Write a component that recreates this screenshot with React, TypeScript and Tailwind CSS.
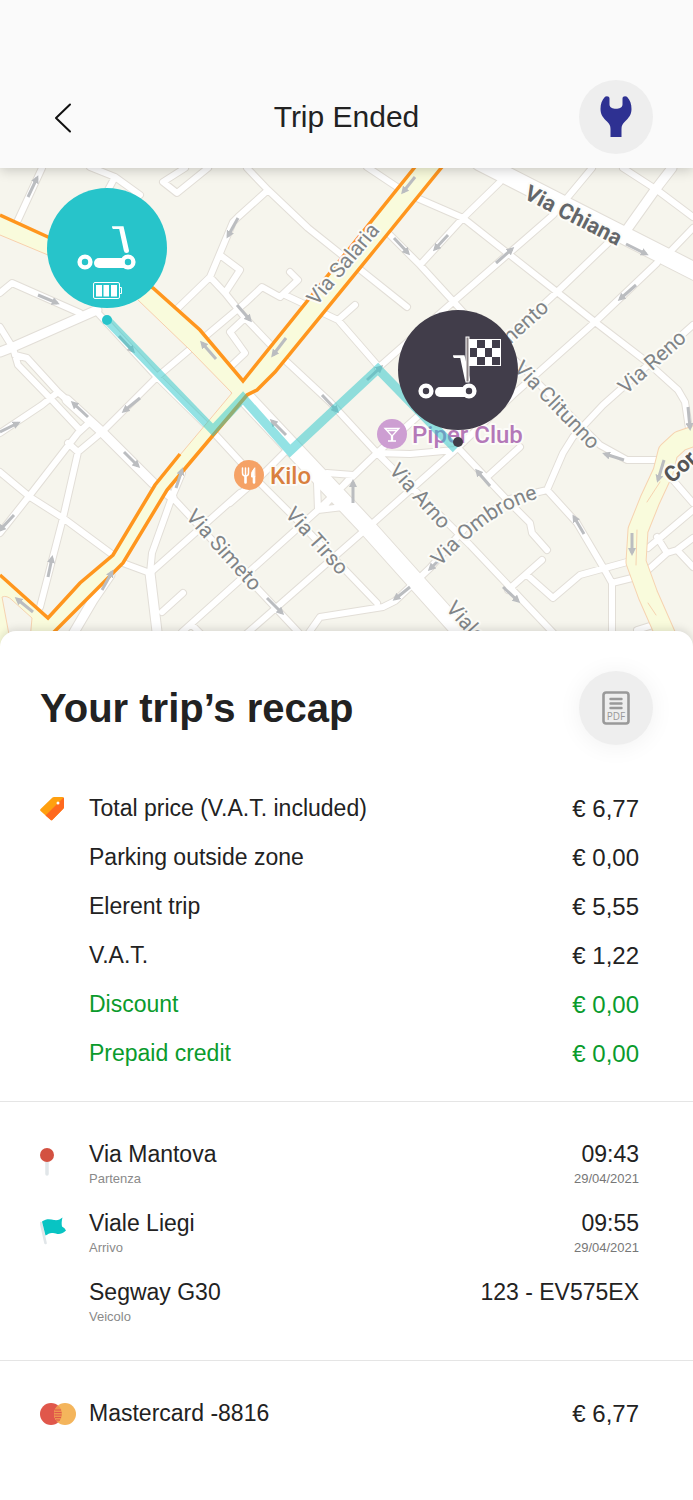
import type { ReactNode } from 'react';

const streets = [
  'M18 220L42 168',
  'M90 167L115 177L140 195M115 177L108 190',
  'M185 168L163 182L177 193L208 168',
  'M268 190L238 217L233 222L210 277L178 308',
  'M220 255L240 270L225 293M210 277L225 293L245 318L287 362L330 402L377 453L470 545L560 640',
  'M0 293L12 283L80 313',
  'M0 327L13 348L18 365L50 398L80 430',
  'M15 355L27 358L58 392L75 407L102 432',
  'M58 392L42 405L0 433',
  'M97 312L157 377L213 432L260 483L300 523L377 603',
  'M78 452L102 432L157 377L207 335L245 303L262 287L280 297L298 280L290 272',
  'M245 318L230 332L245 353L230 367',
  'M247 168L268 190L308 228L407 307',
  'M285 295L338 320L355 305M338 320L378 366',
  'M367 167L397 187M417 198L463 218L557 292L595 322L647 362L678 390L685 402L690 435',
  'M390 235L420 265L463 312L520 365L600 445L627 460L660 460',
  'M378 368L453 302L553 215L592 168',
  'M420 265L463 218L500 182',
  'M623 168L657 190L693 217',
  'M693 228L667 255',
  'M657 263L595 322L513 395L452 453L373 523L245 635',
  'M608 243L557 292L507 338L417 417L377 453L318 510L182 632',
  'M377 453L410 454L455 450',
  'M693 325L603 405L573 437L563 453L547 490L510 499L465 528L430 568L395 601L383 607L320 617L308 634',
  'M460 450L510 503L530 523L532 533L547 550M487 477L520 447',
  'M508 590L542 560M527 575L553 598L580 575L627 562',
  'M547 490L577 523L603 567L612 583L612 640M612 583L640 576',
  'M673 480L693 503M648 548L693 510M657 537L667 553M648 570L667 553L677 550L693 538M677 550L693 567M637 630L653 625',
  'M230 503L262 475L285 452',
  'M317 483L318 510L343 507M327 473L353 475L325 505',
  'M123 563L150 573L240 493',
  'M182 473L172 497L152 553L150 573L158 640M162 612L183 593M191 624L201 634',
  'M172 497L240 570L300 634',
  'M90 422L78 433L30 495L0 533',
  'M68 443L78 452L63 518L40 607',
  'M0 472L30 497L63 518L113 555',
];

const wideStreets = ['M0 352L13 347L97 310', 'M67 400L102 432L153 483L172 497', 'M672 168L655 190L623 235', 'M110 575L93 600L73 634', 'M150 573L158 640'];

const avenues = ['M240 392L367 527L470 642', 'M480 162L580 213L700 274'];

const salaria =
  'M415 167L243 381L232 393L180 455L155 485L113 555L80 583L48 618L30 645L50 645L53 631L123 563L167 490L188 465L240 404L257 390L275 372L442 167Z';
const diagonal = 'M0 215L48 237L153 288L200 330L244 381L232 393L190 350L138 300L48 255L0 235Z';

const arrows = [
  [28, 197, 37, 178], [38, 295, 57, 303], [119, 336, 133, 351], [216, 359, 202, 343],
  [238, 218, 228, 236], [415, 177, 403, 192], [394, 238, 408, 253], [448, 235, 435, 249],
  [237, 305, 250, 320], [286, 338, 273, 355], [367, 380, 381, 367], [322, 395, 337, 411],
  [496, 263, 512, 249], [626, 244, 646, 254], [636, 285, 620, 299], [0, 432, 18, 423],
  [88, 417, 73, 403], [140, 398, 124, 411], [124, 452, 138, 466], [48, 577, 52, 558],
  [14, 515, 0, 530], [33, 612, 17, 599], [102, 590, 112, 572], [176, 488, 182, 470],
  [286, 435, 272, 421], [353, 503, 353, 482], [267, 598, 282, 613], [410, 587, 395, 599],
  [438, 561, 430, 569], [490, 486, 477, 471], [584, 534, 574, 517], [624, 460, 605, 454],
  [664, 460, 658, 480], [632, 533, 632, 553], [688, 407, 690, 428], [503, 587, 518, 601],
];

const labels = [
  { text: 'Via Salaria', x: 343, y: 264, angle: -50 },
  { text: 'Via Reno', x: 652, y: 362, angle: -42 },
  { text: 'Via Clitunno', x: 557, y: 405, angle: 46 },
  { text: 'Via Arno', x: 420, y: 496, angle: 48 },
  { text: 'Via Tirso', x: 317, y: 541, angle: 48 },
  { text: 'Via Simeto', x: 224, y: 550, angle: 48 },
];

const prices = [
  { label: 'Total price (V.A.T. included)', value: '€ 6,77', icon: <TagIcon /> },
  { label: 'Parking outside zone', value: '€ 0,00' },
  { label: 'Elerent trip', value: '€ 5,55' },
  { label: 'V.A.T.', value: '€ 1,22' },
  { label: 'Discount', value: '€ 0,00', green: true },
  { label: 'Prepaid credit', value: '€ 0,00', green: true },
];

function TagIcon() {
  return (
    <svg className="h-6 w-6" viewBox="0 0 24 24">
      <path d="M12.5 0.5Q13 0 14 0H22.5Q24 0 24 1.500V10Q24 11 23.300 11.700L12.500 22.800Q11.500 23.800 10.500 22.800L0.600 14Q-0.400 13 0.600 12Z" fill="#ffa00f" />
      <path d="M23.600 0.400Q24 0.800 24 1.500V10Q24 11 23.300 11.700L12.500 22.800Q11.500 23.800 10.500 22.800L5.500 18.400Z" fill="#ff691f" />
      <circle cx="18" cy="6" r="1.500" fill="#fff" />
    </svg>
  );
}

function PinIcon() {
  return (
    <svg className="h-7 w-3.5" viewBox="0 0 14 28">
      <path d="M7 12V26" stroke="#e1e6e9" strokeWidth="3.500" strokeLinecap="round" />
      <circle cx="7" cy="7" r="7" fill="#d35141" />
    </svg>
  );
}

function FlagIcon() {
  return (
    <svg className="h-7 w-[26px]" viewBox="0 0 26 28">
      <path d="M1 6L5.500 26" stroke="#e1e6e9" strokeWidth="2.600" strokeLinecap="round" />
      <path d="M2 4.500C7 1 11 2.500 14 3C18 3.500 20 2.500 22.500 0.500C21.500 4 21.500 7 22 9.500Q25 11 26 13.500C20 19 17 16.500 13 16C10 15.500 8 17 5.500 18.500Z" fill="#08c4c3" />
    </svg>
  );
}

function CardIcon() {
  return (
    <svg className="h-[22px] w-9" viewBox="0 0 36 22">
      <circle cx="11" cy="11" r="11" fill="#e0574b" />
      <circle cx="25" cy="11" r="11" fill="#f4b55c" />
      <path d="M18 2.500A11 11 0 0 1 18 19.500A11 11 0 0 1 18 2.500Z" fill="#ee9350" />
      <path d="M15 7H21M14.500 9.500H21.500M14.500 12H21.500M15 14.500H21M16 17H20" stroke="#e0574b" strokeWidth="1" />
    </svg>
  );
}

function WrenchIcon() {
  return (
    <svg className="h-[42px] w-8" viewBox="0 0 32 42">
      <path
        d="M5 0.800C1.800 4 0.500 8.500 0.500 13C0.500 19 3.500 22 7 25.500C9.500 28 10.500 29.500 10.500 33V41H21.500V33C21.500 29.500 22.500 28 25 25.500C28.500 22 31.500 19 31.500 13C31.500 8.500 30.200 4 27 0.800C25.500 -0.400 22.500 0 22.500 2.500V8.500C22.500 14.300 9.500 14.300 9.500 8.500V2.500C9.500 0 6.500 -0.400 5 0.800Z"
        fill="#2e3192"
      />
    </svg>
  );
}

function PdfIcon() {
  return (
    <svg className="h-[34px] w-7" viewBox="0 0 28 34">
      <rect x="1.500" y="1.500" width="25" height="31" rx="2.500" fill="none" stroke="#999" strokeWidth="2.600" />
      <path d="M8.500 8H19.500M8.500 12.500H19.500M8.500 17H19.500" stroke="#999" strokeWidth="2.400" strokeLinecap="round" />
      <text x="14" y="29" textAnchor="middle" fontSize="10" fill="#999" fontFamily="'Open Sans', sans-serif">
        PDF
      </text>
    </svg>
  );
}

function Scooter({ hole }: { hole: string }) {
  return (
    <g>
      <path d="M99 263H128" stroke="#fff" strokeWidth="10" strokeLinecap="round" />
      <circle cx="85" cy="262" r="5.400" fill={hole} stroke="#fff" strokeWidth="4.400" />
      <circle cx="128" cy="262" r="5.400" fill={hole} stroke="#fff" strokeWidth="4.400" />
      <path d="M112 226.300H123.500L129 250.500Q129 253 126.500 253Q124.300 253 123.800 250.500L119.200 229H113Q112 229 112 226.300Z" fill="#fff" />
    </g>
  );
}

function TripMap() {
  return (
    <svg className="block w-full bg-[#f6f5ed]" viewBox="0 168 693 479" role="img" aria-label="Trip route">
      <defs>
        <marker id="arrow" viewBox="0 0 8 8" refX="5" refY="4" markerWidth="8" markerHeight="8" markerUnits="userSpaceOnUse" orient="auto">
          <path d="M0 0L8 4L0 8Z" fill="#bbbdc0" />
        </marker>
        <path id="ombrone" d="M440 567C468 537 498 508 546 496" />
      </defs>

      <g fill="none" strokeLinecap="round" strokeLinejoin="round">
        <g stroke="#e2ded7">
          <path d={streets.join('')} strokeWidth="8" />
          <path d={wideStreets.join('')} strokeWidth="11" />
          <path d={avenues.join('')} strokeWidth="19" />
        </g>
        <g stroke="#fff">
          <path d={streets.join('')} strokeWidth="6" />
          <path d={wideStreets.join('')} strokeWidth="9" />
          <path d={avenues.join('')} strokeWidth="17" />
        </g>
        <path d="M700 434L680 441L668 452L663 472L650 500L638 530L636 562L648 595L670 645" stroke="#f6d3b0" strokeWidth="21" />
        <path d="M700 434L680 441L668 452L663 472L650 500L638 530L636 562L648 595L670 645" stroke="#f9fbdc" strokeWidth="19" />
        <path d="M660 482L647 502M637 530L636 565M648 603L656 615" stroke="#f6d3b0" />
      </g>

      <path d="M0 573L48 618L54 631V647H0Z" fill="#f9fbdc" />
      <path d="M2 597Q7 595 12 600L32 618L30 640H10Z" fill="#f6f5ed" stroke="#f6d3b0" />
      <path d={salaria} fill="#f9fbdc" />
      <path d={diagonal} fill="#f9fbdc" />
      <path d="M0 235L48 255M138 300L190 350L232 393L180 455" fill="none" stroke="#f8cfac" />
      <g fill="none" stroke="#ff961e" strokeWidth="3.500">
        <path d="M0 215L48 237L153 288L200 330L243 381L415 167" />
        <path d="M442 167L373 252L275 372L257 390L247 395L188 465L167 490L123 563L53 633" />
        <path d="M180 454L155 485L113 555L80 583L48 618L0 575" />
      </g>

      <g stroke="#bbbdc0" strokeWidth="3">
        {arrows.map(([x1, y1, x2, y2]) => (
          <line key={`${x1}-${y1}`} x1={x1} y1={y1} x2={x2} y2={y2} markerEnd="url(#arrow)" />
        ))}
      </g>

      <g
        fill="#808487"
        stroke="#fcfcf8"
        strokeWidth="4"
        strokeLinejoin="round"
        paintOrder="stroke"
        fontFamily="Roboto, sans-serif"
        fontSize="21"
      >
        {labels.map((label) => (
          <text key={label.text} x={label.x} y={label.y} textAnchor="middle" dominantBaseline="central" transform={`rotate(${label.angle} ${label.x} ${label.y})`}>
            {label.text}
          </text>
        ))}
        <text>
          <textPath href="#ombrone">Via Ombrone</textPath>
        </text>
        <text x="550" y="309" textAnchor="end" transform="rotate(-42 550 309)">mento</text>
        <text x="445" y="609" transform="rotate(48 445 609)">Viale</text>
        <g fontSize="22" fontWeight="700">
          <text x="523" y="198" fill="#636669" transform="rotate(27 523 198)">Via Chiana</text>
          <text x="672" y="484" fill="#555" transform="rotate(-42 672 484)">Cor</text>
        </g>
        <g fontSize="24" fontWeight="500">
          <text x="270" y="484" fill="#d9803f">Kilo</text>
          <text x="412" y="443" fill="#b478b8">Piper Club</text>
        </g>
      </g>

      <circle cx="249" cy="475" r="15" fill="#f5a266" />
      <g fill="none" stroke="#fff" strokeLinecap="round">
        <path d="M242.500 468V473Q242.500 476 245.500 476Q248.500 476 248.500 473V468M245.500 468V476" strokeWidth="1.500" />
        <path d="M245.500 476V482.500M254 477V482.500" strokeWidth="2.600" />
        <path d="M254.500 468Q250.500 472 251.500 477H254.500Z" fill="#fff" />
      </g>
      <circle cx="392" cy="434" r="15" fill="#cd9ed2" />
      <path d="M385 428.500H399L392.500 435.500V441H396H388H391.500V435.500ZM387 430.500H397" fill="none" stroke="#fff" strokeWidth="1.300" />

      <path d="M107 320L213 430L243 398L290 451L378 369L456 449" fill="none" stroke="#27c5c9" strokeOpacity="0.5" strokeWidth="9" />
      <circle cx="107" cy="320" r="5" fill="#27c4ca" />
      <circle cx="458" cy="442" r="5" fill="#413d4a" />

      <circle cx="107" cy="248" r="60" fill="#27c4ca" />
      <Scooter hole="#27c4ca" />
      <rect x="93.500" y="282.500" width="26" height="16" rx="1.500" fill="none" stroke="#fff" />
      <path d="M120 287.500H121.500V293.500H120" fill="none" stroke="#fff" />
      <path d="M96 285H102V296.500H96ZM103.500 285H109V296.500H103.500ZM111 285H117V296.500H111Z" fill="#fff" />

      <circle cx="458" cy="370" r="60" fill="#413d4a" />
      <g transform="translate(341 129)">
        <Scooter hole="#413d4a" />
      </g>
      <rect x="466" y="337" width="3" height="45" fill="#8c8486" stroke="#fff" strokeWidth="1" />
      <rect x="469" y="339" width="32" height="27" fill="#fff" />
      <path
        d="M477 340H485V348H477ZM492 340H500V348H492ZM470 348H477V357H470ZM485 348H492V357H485ZM477 357H485V365H477ZM492 357H500V365H492Z"
        fill="#413d4a"
      />
    </svg>
  );
}

interface TripRowProps {
  icon?: ReactNode;
  title: string;
  caption: string;
  value: string;
  date?: string;
}

function TripRow({ icon, title, caption, value, date }: TripRowProps) {
  return (
    <li className="flex">
      <div className="w-[49px] pt-2.5">{icon}</div>
      <div className="flex-1">
        <p className="text-[23px] leading-8">{title}</p>
        <p className="text-[13px] leading-[18px] text-[#8a8a8a]">{caption}</p>
      </div>
      <div className="text-right">
        <p className="text-[23px] leading-8">{value}</p>
        {date && <p className="text-[13px] leading-[18px] text-[#777]">{date}</p>}
      </div>
    </li>
  );
}

export default function App() {
  return (
    <div className="min-h-screen bg-white font-['Liberation_Sans',sans-serif] text-[#222]">
      <header className="relative z-10 flex items-center justify-between bg-[#fafafa] px-10 pt-20 pb-3.5 shadow-[0_2px_12px_rgba(0,0,0,0.2)]">
        <button aria-label="Back" className="flex w-[74px] justify-start pl-3.5">
          <svg className="h-8 w-[18px]" viewBox="0 0 18 32" fill="none" stroke="#111" strokeWidth="2" strokeLinecap="round" strokeLinejoin="round">
            <path d="M16 3.500L2 17L16 30.500" />
          </svg>
        </button>
        <h1 className="text-3xl">Trip Ended</h1>
        <button aria-label="Report a problem" className="flex size-[74px] items-center justify-center rounded-full bg-[#eee]">
          <WrenchIcon />
        </button>
      </header>

      <TripMap />

      <main className="relative -mt-4 rounded-t-2xl bg-white pb-16 shadow-[0_-2px_8px_rgba(0,0,0,0.12)]">
        <section className="border-b border-[#e5e5e5] pt-10 pb-[23px]">
          <div className="flex items-center justify-between px-10">
            <h2 className="text-[40px] font-bold">Your trip’s recap</h2>
            <button aria-label="Download PDF" className="flex size-[74px] items-center justify-center rounded-full bg-[#eee] shadow-[0_2px_24px_rgba(0,0,0,0.06)]">
              <PdfIcon />
            </button>
          </div>
          <dl className="mt-[39px] pr-[54px] pl-10 leading-[49px]">
            {prices.map((row) => (
              <div key={row.label} className={row.green ? 'flex text-[#0a9b2c]' : 'flex'}>
                <dt className="flex flex-1 items-center text-[23px]">
                  <span className="w-[49px]">{row.icon}</span>
                  {row.label}
                </dt>
                <dd className="text-2xl leading-[49px]">{row.value}</dd>
              </div>
            ))}
          </dl>
        </section>

        <section className="border-b border-[#e5e5e5] pt-9 pr-[54px] pb-[34px] pl-10">
          <ul className="flex flex-col gap-[19px]">
            <TripRow icon={<PinIcon />} title="Via Mantova" caption="Partenza" value="09:43" date="29/04/2021" />
            <TripRow icon={<FlagIcon />} title="Viale Liegi" caption="Arrivo" value="09:55" date="29/04/2021" />
            <TripRow title="Segway G30" caption="Veicolo" value="123 - EV575EX" />
          </ul>
        </section>

        <section className="flex items-center pt-7 pr-[54px] pl-10 leading-[49px]">
          <span className="w-[49px]">
            <CardIcon />
          </span>
          <p className="flex-1 text-[23px]">Mastercard -8816</p>
          <p className="text-2xl leading-[49px]">€ 6,77</p>
        </section>
      </main>
    </div>
  );
}
